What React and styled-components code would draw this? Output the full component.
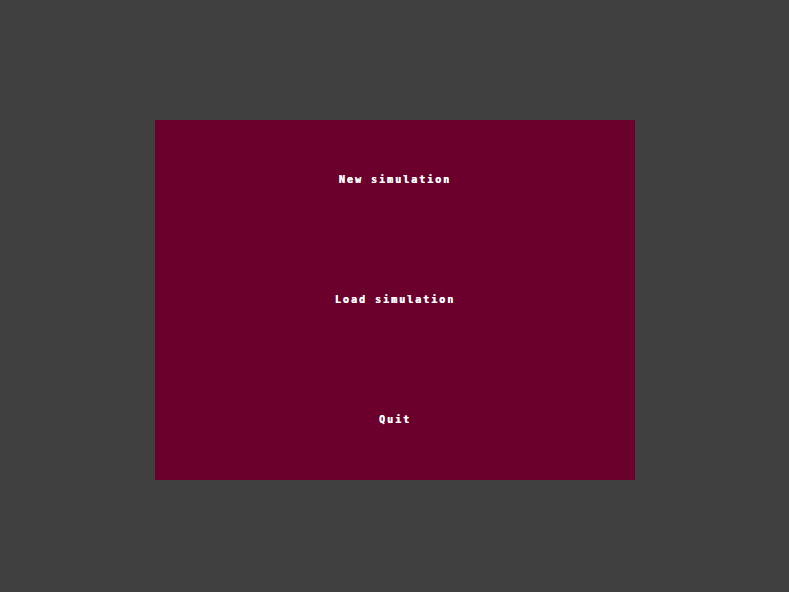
import React from "react";
import styled, { createGlobalStyle } from "styled-components";

const Global = createGlobalStyle`
  html, body { margin: 0; padding: 0; background: #404040; }
  body { width: 789px; height: 592px; overflow: hidden; }
`;

const Screen = styled.div`
  width: 789px;
  height: 592px;
  box-sizing: border-box;
  padding: 120px 0 0 155px;
`;

const Panel = styled.div`
  width: 480px;
  height: 360px;
  background: #6c002d;
  display: grid;
  grid-template-rows: repeat(3, 1fr);
`;

const MenuItem = styled.div`
  display: flex;
  align-items: center;
  justify-content: center;
  color: #ffffff;
  font-family: "DejaVu Sans Mono", "Liberation Mono", monospace;
  font-weight: bold;
  font-size: 10px;
  letter-spacing: 2px;
  padding-bottom: 2px;
  text-shadow: 0.4px 0 0 #ffffff;
  cursor: default;
`;

export default function App() {
  return (
    <>
      <Global />
      <Screen>
        <Panel>
          <MenuItem>New simulation</MenuItem>
          <MenuItem>Load simulation</MenuItem>
          <MenuItem>Quit</MenuItem>
        </Panel>
      </Screen>
    </>
  );
}
